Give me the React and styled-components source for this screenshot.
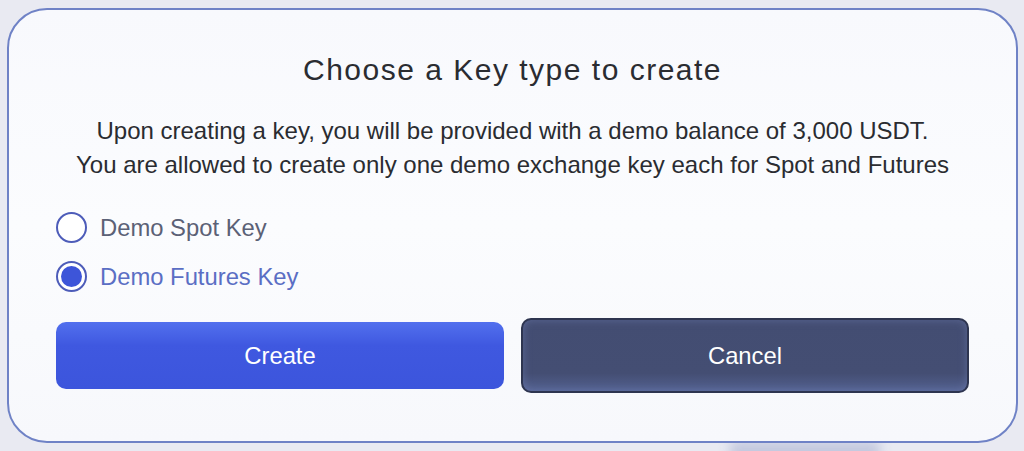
import React, { useState } from "react";
import styled, { createGlobalStyle } from "styled-components";

const GlobalStyle = createGlobalStyle`
  html, body {
    margin: 0;
    padding: 0;
    background: #e9eaf2;
    font-family: "Liberation Sans", Arial, sans-serif;
  }
`;

const Page = styled.div`
  width: 1024px;
  height: 451px;
  box-sizing: border-box;
  padding: 8px 6px 8px 7px;
  overflow: hidden;
  position: relative;
`;

const Card = styled.div`
  position: relative;
  box-sizing: border-box;
  height: 435px;
  border: 2px solid #6f82c6;
  border-radius: 40px;
  background: linear-gradient(180deg, #f8f9fd 0%, #fbfcfe 50%, #f7f8fc 100%);
  padding: 38px 47px 0 47px;
  display: flex;
  flex-direction: column;
  z-index: 1;
`;

const Glow = styled.div`
  position: absolute;
  left: 730px;
  bottom: -12px;
  width: 150px;
  height: 22px;
  background: #c3c8de;
  filter: blur(6px);
  z-index: 0;
`;

const Title = styled.h2`
  margin: 0;
  text-align: center;
  font-size: 30px;
  font-weight: 400;
  letter-spacing: 1.5px;
  color: #2a2c31;
  line-height: 44px;
`;

const Description = styled.p`
  margin: 22px 0 0 0;
  text-align: center;
  font-size: 24px;
  line-height: 34px;
  color: #2a2c31;
  white-space: nowrap;
`;

const Options = styled.div`
  margin-top: 30px;
  display: flex;
  flex-direction: column;
  gap: 18px;
`;

const Option = styled.label`
  display: flex;
  align-items: center;
  gap: 13px;
  cursor: pointer;
  font-size: 23.8px;
  line-height: 30px;
  color: ${(p) => (p.$active ? "#5a6ec4" : "#5b6176")};
`;

const Circle = styled.span`
  box-sizing: border-box;
  width: 31px;
  height: 31px;
  border-radius: 50%;
  border: 2px solid #4d5cb9;
  background: #ffffff;
  display: flex;
  align-items: center;
  justify-content: center;

  &::after {
    content: "";
    width: 21px;
    height: 21px;
    border-radius: 50%;
    background: #3d55d9;
    display: ${(p) => (p.$active ? "block" : "none")};
  }
`;

const Buttons = styled.div`
  margin-top: 26px;
  display: grid;
  grid-template-columns: 1fr 1fr;
  gap: 17px;
  align-items: center;
`;

const Button = styled.button`
  box-sizing: border-box;
  font-family: "Liberation Sans", Arial, sans-serif;
  font-size: 23.8px;
  color: #ffffff;
  cursor: pointer;
`;

const CreateButton = styled(Button)`
  height: 67px;
  border: none;
  border-radius: 10px;
  background: linear-gradient(180deg, #5270ee 0%, #3f58e0 35%, #3c55dc 100%);
`;

const CancelButton = styled(Button)`
  height: 75px;
  border: 2px solid #2e3550;
  border-radius: 10px;
  background: linear-gradient(180deg, #434d72 0%, #444e73 75%, #536190 100%);
  box-shadow: inset 0 0 8px rgba(120, 135, 190, 0.45);
`;

const options = [
  { id: "spot", label: "Demo Spot Key" },
  { id: "futures", label: "Demo Futures Key" },
];

export default function App() {
  const [selected, setSelected] = useState("futures");

  return (
    <>
      <GlobalStyle />
      <Page>
        <Card>
          <Title>Choose a Key type to create</Title>
          <Description>
            Upon creating a key, you will be provided with a demo balance of 3,000 USDT.
            <br />
            You are allowed to create only one demo exchange key each for Spot and Futures
          </Description>
          <Options>
            {options.map((o) => (
              <Option
                key={o.id}
                $active={selected === o.id}
                onClick={() => setSelected(o.id)}
              >
                <Circle $active={selected === o.id} />
                {o.label}
              </Option>
            ))}
          </Options>
          <Buttons>
            <CreateButton>Create</CreateButton>
            <CancelButton>Cancel</CancelButton>
          </Buttons>
        </Card>
        <Glow />
      </Page>
    </>
  );
}
